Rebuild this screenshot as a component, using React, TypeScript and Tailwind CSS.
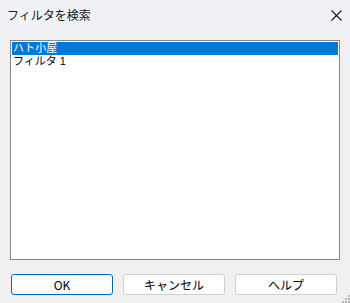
const font = { fontFamily: '"Noto Sans CJK JP", "Noto Sans", sans-serif' };
const listFont = { fontFamily: '"Liberation Sans", "Noto Sans CJK JP", sans-serif' };

const App: React.FC = () => {
  return (
    <div className="w-[350px] h-[303px] bg-[#f0f0f0] flex flex-col text-black" style={font}>
      {/* タイトルバー */}
      <div className="h-[30px] bg-[#eff1f7] flex items-center justify-between pl-[7px] pr-[7px] shrink-0">
        <span className="text-[12px] leading-none text-[#1a1a1a]">フィルタを検索</span>
        <svg width="11" height="11" viewBox="0 0 11 11" className="mr-[1px]">
          <path d="M0.5 0.5 L10.5 10.5 M10.5 0.5 L0.5 10.5" stroke="#1a1a1a" strokeWidth="1.1" />
        </svg>
      </div>

      {/* 本体 */}
      <div className="flex-1 flex flex-col px-[10px] pt-[10px] relative">
        {/* リスト */}
        <div className="h-[220px] w-[330px] border border-[#828790] bg-white p-[1px]" style={listFont}>
          <div className="h-[13px] bg-[#0078d7] text-white text-[11px] leading-[13px] pl-[1px]">ハト小屋</div>
          <div className="h-[13px] text-[11px] leading-[13px] pl-[1px]">フィルタ 1</div>
        </div>

        {/* ボタン */}
        <div className="flex gap-[10px] mt-[14px] pl-[1px]">
          <button className="w-[102px] h-[21px] rounded-[3px] border border-[#0067c0] bg-[#fdfdfd] text-[12px] leading-none">
            OK
          </button>
          <button className="w-[102px] h-[21px] rounded-[3px] border border-[#d0d0d0] bg-[#fdfdfd] text-[12px] leading-none">
            キャンセル
          </button>
          <button className="w-[102px] h-[21px] rounded-[3px] border border-[#d0d0d0] bg-[#fdfdfd] text-[12px] leading-none">
            ヘルプ
          </button>
        </div>

        {/* リサイズグリップ */}
        <svg width="8" height="8" viewBox="0 0 8 8" className="absolute right-0 bottom-0">
          <rect x="6" y="0" width="2" height="2" fill="#b8b8b8" />
          <rect x="3" y="3" width="2" height="2" fill="#b8b8b8" />
          <rect x="6" y="3" width="2" height="2" fill="#b8b8b8" />
          <rect x="0" y="6" width="2" height="2" fill="#b8b8b8" />
          <rect x="3" y="6" width="2" height="2" fill="#b8b8b8" />
          <rect x="6" y="6" width="2" height="2" fill="#b8b8b8" />
        </svg>
      </div>
    </div>
  );
};

export default App;
